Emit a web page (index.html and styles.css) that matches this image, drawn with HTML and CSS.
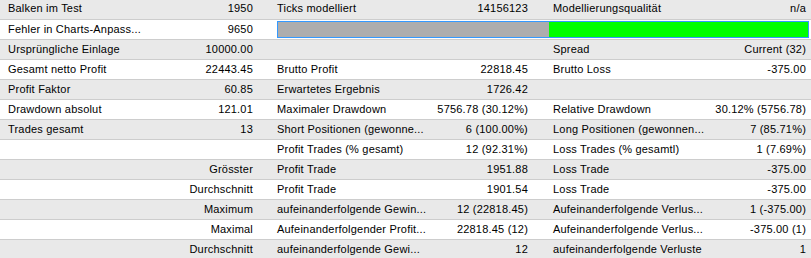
FILE: index.html
```html
<!DOCTYPE html>
<html lang="de">
<head>
<meta charset="utf-8">
<title>Testergebnisse</title>
<link rel="stylesheet" href="styles.css">
</head>
<body>
<table class="report">
  <colgroup>
    <col class="c-l1"><col class="c-v1"><col class="c-l2"><col class="c-v2"><col class="c-l3"><col class="c-v3">
  </colgroup>
  <tbody>
    <tr class="odd">
      <td class="lbl first">Balken im Test</td><td class="val v1">1950</td>
      <td class="lbl mid">Ticks modelliert</td><td class="val v2">14156123</td>
      <td class="lbl last">Modellierungsqualität</td><td class="val v3">n/a</td>
    </tr>
    <tr class="even">
      <td class="lbl first">Fehler in Charts-Anpass...</td><td class="val v1">9650</td>
      <td class="barcell" colspan="4">
        <div class="bar"><div class="bar-grey"></div><div class="bar-green"></div></div>
      </td>
    </tr>
    <tr class="odd">
      <td class="lbl first">Ursprüngliche Einlage</td><td class="val v1">10000.00</td>
      <td class="lbl mid"></td><td class="val v2"></td>
      <td class="lbl last">Spread</td><td class="val v3">Current (32)</td>
    </tr>
    <tr class="even">
      <td class="lbl first">Gesamt netto Profit</td><td class="val v1">22443.45</td>
      <td class="lbl mid">Brutto Profit</td><td class="val v2">22818.45</td>
      <td class="lbl last">Brutto Loss</td><td class="val v3">-375.00</td>
    </tr>
    <tr class="odd">
      <td class="lbl first">Profit Faktor</td><td class="val v1">60.85</td>
      <td class="lbl mid">Erwartetes Ergebnis</td><td class="val v2">1726.42</td>
      <td class="lbl last"></td><td class="val v3"></td>
    </tr>
    <tr class="even">
      <td class="lbl first">Drawdown absolut</td><td class="val v1">121.01</td>
      <td class="lbl mid">Maximaler Drawdown</td><td class="val v2">5756.78 (30.12%)</td>
      <td class="lbl last">Relative Drawdown</td><td class="val v3">30.12% (5756.78)</td>
    </tr>
    <tr class="odd">
      <td class="lbl first">Trades gesamt</td><td class="val v1">13</td>
      <td class="lbl mid">Short Positionen (gewonne...</td><td class="val v2">6 (100.00%)</td>
      <td class="lbl last">Long Positionen (gewonnen...</td><td class="val v3">7 (85.71%)</td>
    </tr>
    <tr class="even">
      <td class="lbl first"></td><td class="val v1"></td>
      <td class="lbl mid">Profit Trades (% gesamt)</td><td class="val v2">12 (92.31%)</td>
      <td class="lbl last">Loss Trades (% gesamtl)</td><td class="val v3">1 (7.69%)</td>
    </tr>
    <tr class="odd">
      <td class="lbl first"></td><td class="val v1">Grösster</td>
      <td class="lbl mid">Profit Trade</td><td class="val v2">1951.88</td>
      <td class="lbl last">Loss Trade</td><td class="val v3">-375.00</td>
    </tr>
    <tr class="even">
      <td class="lbl first"></td><td class="val v1">Durchschnitt</td>
      <td class="lbl mid">Profit Trade</td><td class="val v2">1901.54</td>
      <td class="lbl last">Loss Trade</td><td class="val v3">-375.00</td>
    </tr>
    <tr class="odd">
      <td class="lbl first"></td><td class="val v1">Maximum</td>
      <td class="lbl mid">aufeinanderfolgende Gewin...</td><td class="val v2">12 (22818.45)</td>
      <td class="lbl last">Aufeinanderfolgende Verlus...</td><td class="val v3">1 (-375.00)</td>
    </tr>
    <tr class="even">
      <td class="lbl first"></td><td class="val v1">Maximal</td>
      <td class="lbl mid">Aufeinanderfolgender Profit...</td><td class="val v2">22818.45 (12)</td>
      <td class="lbl last">Aufeinanderfolgende Verlus...</td><td class="val v3">-375.00 (1)</td>
    </tr>
    <tr class="odd">
      <td class="lbl first"></td><td class="val v1">Durchschnitt</td>
      <td class="lbl mid">aufeinanderfolgende Gewi...</td><td class="val v2">12</td>
      <td class="lbl last">aufeinanderfolgende Verluste</td><td class="val v3">1</td>
    </tr>
  </tbody>
</table>
</body>
</html>
```

FILE: styles.css
```css
html, body {
  margin: 0;
  padding: 0;
  background: #ffffff;
}

body {
  font-family: "Liberation Sans", Arial, sans-serif;
  font-size: 11px;
  color: #000000;
  overflow: hidden;
}

.report {
  width: 811px;
  table-layout: fixed;
  border-collapse: collapse;
  border-spacing: 0;
  margin-top: -1px;
}

.c-l1 { width: 150px; }
.c-v1 { width: 115px; }
.c-l2 { width: 155px; }
.c-v2 { width: 120px; }
.c-l3 { width: 150px; }
.c-v3 { width: 121px; }

.report tr {
  height: 20px;
}

.report td {
  height: 19px;
  padding: 0;
  border-bottom: 1px solid #cdcdcd;
  white-space: nowrap;
  overflow: visible;
  line-height: 19px;
  letter-spacing: 0.2px;
  vertical-align: middle;
}

.odd td { background: #e9e9e9; }
.even td { background: #ffffff; }

.lbl.first { padding-left: 8px; }
.lbl.mid { padding-left: 12px; }
.lbl.last { padding-left: 13px; }

.val { text-align: right; }
.val.v1 { padding-right: 12px; }
.val.v2 { padding-right: 12px; }
.val.v3 { padding-right: 5px; }

.barcell {
  padding: 0 2px 0 12px !important;
}

.bar {
  display: flex;
  height: 15px;
  border: 1px solid #3399ff;
  box-sizing: content-box;
}

.bar-grey {
  width: 271px;
  background: #adadad;
}

.bar-green {
  flex: 1;
  background: #00ff00;
}
```
